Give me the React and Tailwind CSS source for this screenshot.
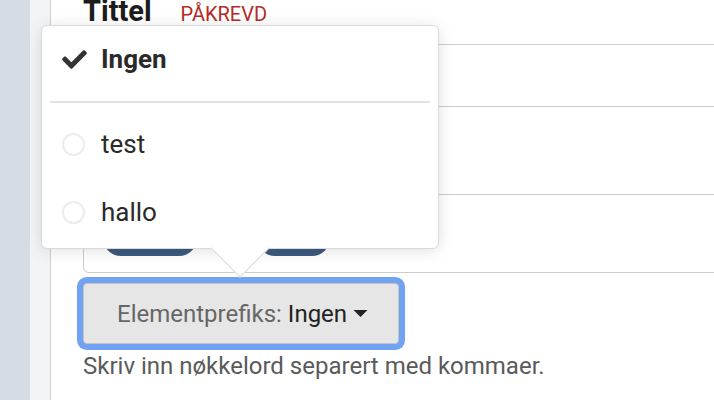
function CheckIcon() {
    return (
        <svg viewBox="0 60 512 392" className="w-[25px] h-[19px]" fill="#333">
            <path d="M173.898 439.404l-166.4-166.4c-9.997-9.997-9.997-26.206 0-36.204l36.203-36.204c9.997-9.998 26.207-9.998 36.204 0L192 312.69 432.095 72.596c9.997-9.997 26.207-9.997 36.204 0l36.203 36.204c9.997 9.997 9.997 26.206 0 36.204l-294.4 294.401c-9.998 9.997-26.207 9.997-36.204-.001z" />
        </svg>
    );
}

function Option({ label, top }) {
    return (
        <div className={`flex items-center ${top}`}>
            <div className="w-[39px] flex items-center">
                <span className="w-[23px] h-[23px] rounded-full border-2 border-[#ececec]"></span>
            </div>
            <span className="text-[26px] leading-[30px] text-[#2a2a2a]">{label}</span>
        </div>
    );
}

export default function App() {
    return (
        <div className="relative w-[714px] h-[400px] overflow-hidden flex bg-white font-['Roboto',sans-serif]">
            <div className="w-[30px] shrink-0 bg-[#d6dce4]"></div>
            <div className="w-[21px] shrink-0 bg-[#f3f4f6] border-r border-[#cfcfcf]"></div>

            <main className="flex-1 pl-[32px]">
                <div className="flex items-baseline mt-[-5px] h-[32px] leading-[32px]">
                    <span className="text-[29px] font-bold text-[#1c1c1c]">Tittel</span>
                    <span className="ml-[29px] text-[20px] text-[#b52b27]">PÅKREVD</span>
                </div>

                <div className="mt-[17px] w-[700px] h-[63px] border border-[#cccccc] rounded-[6px]"></div>

                <div className="mt-[87px] w-[700px] h-[79px] border border-[#cccccc] rounded-[6px] flex items-end gap-[60px] pl-[19px] pb-[16px]">
                    <span className="w-[94px] h-[36px] rounded-full bg-[#3c5a80]"></span>
                    <span className="w-[73px] h-[36px] rounded-full bg-[#3c5a80]"></span>
                </div>

                <button className="mt-[10px] w-[316px] h-[61px] flex items-center pl-[33px] bg-[#e6e6e6] border border-[#c4c4c4] rounded-[4px] shadow-[0_0_0_6px_#72a3f2] text-[24px] leading-[28px]">
                    <span className="text-[#666]">Elementprefiks:</span>
                    <span className="ml-[6px] text-[#222]">Ingen</span>
                    <svg viewBox="0 0 16 8" className="ml-[6px] w-[15px] h-[7px]" fill="#222">
                        <path d="M0 0h16L8 8z" />
                    </svg>
                </button>

                <p className="mt-[8px] text-[24px] leading-[28px] text-[#5a5a5a]">
                    Skriv inn nøkkelord separert med kommaer.
                </p>
            </main>

            <div className="absolute left-[41px] top-[25px] w-[398px] h-[224px] bg-white border border-[#dadada] rounded-[6px] shadow-[0_2px_16px_rgba(0,0,0,0.12)]">
                <div className="flex items-center pl-[20px] pt-[18px]">
                    <div className="w-[39px] flex items-center">
                        <CheckIcon />
                    </div>
                    <span className="text-[26px] leading-[30px] font-bold text-[#2a2a2a]">Ingen</span>
                </div>
                <div className="mx-[8px] mt-[27px] h-[2px] bg-[#e2e2e2]"></div>
                <div className="pl-[20px]">
                    <Option label="test" top="mt-[26px]" />
                    <Option label="hallo" top="mt-[38px]" />
                </div>
            </div>
            <div className="absolute left-[219px] top-[227px] w-[42px] h-[42px] bg-white border-r border-b border-[#dadada] rotate-45"></div>
        </div>
    );
}
